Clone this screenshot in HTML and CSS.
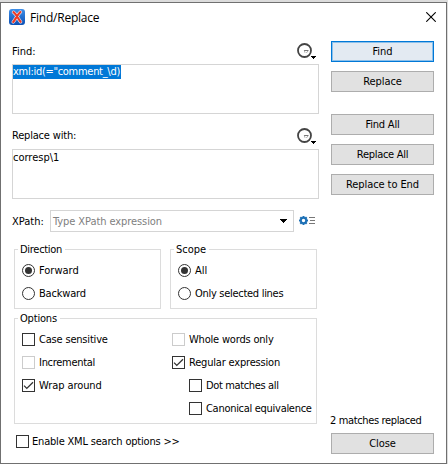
FILE: index.html
```html
<!DOCTYPE html>
<html lang="en">
<head>
<meta charset="utf-8">
<title>Find/Replace</title>
<link rel="stylesheet" href="styles.css">
</head>
<body>
<svg class="defs" width="0" height="0" aria-hidden="true">
  <symbol id="history" viewBox="0 0 19 17">
    <circle cx="7.5" cy="7.5" r="6.5" fill="#fff" stroke="#444" stroke-width="1.8"/>
    <path d="M7 7.5H11.5" fill="none" stroke="#777" stroke-width="1"/>
    <path d="M7.3 7.5L8 9.8M11 8L9.3 10" fill="none" stroke="#999" stroke-width=".8"/>
    <path d="M14 13h5v1h-1v1h-1v1h-1v-1h-1v-1h-1z" fill="#000"/>
  </symbol>
  <symbol id="tick" viewBox="0 0 11 11">
    <path d="M1 5.6L3.8 8.4L10 2.2" fill="none" stroke="#333" stroke-width="1.3"/>
  </symbol>
</svg>
<main class="dialog">
  <header class="titlebar">
    <svg class="logo" width="16" height="16" viewBox="0 0 16 16">
      <defs><linearGradient id="blue" x2="0" y2="1"><stop stop-color="#3f8fe8"/><stop offset="1" stop-color="#0a4fb4"/></linearGradient></defs>
      <rect width="16" height="16" rx="3" fill="url(#blue)"/>
      <path d="M4.5 3.2C7.5 5 9 10 11.6 12.8M11.4 3C8.5 5.5 7 9.5 4.2 13" fill="none" stroke="#d9dff0" stroke-width="3.4" stroke-linecap="round"/>
      <path d="M4.5 3.2C7.5 5 9 10 11.6 12.8M11.4 3C8.5 5.5 7 9.5 4.2 13" fill="none" stroke="#ee3a24" stroke-width="2.1" stroke-linecap="round"/>
    </svg>
    <h1 class="title">Find/Replace</h1>
    <svg class="close" width="10" height="10" viewBox="0 0 10 10"><path d="M.3 .3L9.7 9.7M9.7 .3L.3 9.7" stroke="#000" stroke-width="1.1"/></svg>
  </header>
  <div class="content">
    <section class="form">
      <div class="label-row"><span>Find:</span><svg width="19" height="17"><use href="#history"/></svg></div>
      <div class="textarea"><span class="selected tight">xml:id(="comment_\d)</span></div>
      <div class="label-row second"><span class="snug">Replace with:</span><svg width="19" height="17"><use href="#history"/></svg></div>
      <div class="textarea"><span>corresp\1</span></div>
      <div class="xpath-row">
        <span class="xpath-label">XPath:</span>
        <div class="combo"><span class="slight">Type XPath expression</span><svg width="7" height="4" viewBox="0 0 7 4"><path d="M0 0h7v1H6v1H5v1H4v1H3V3H2V2H1V1H0z"/></svg></div>
        <svg class="gear" width="17" height="10" viewBox="0 0 17 10">
          <path d="M4.5 0V9M0 4.5H9M1.3 1.3L7.7 7.7M7.7 1.3L1.3 7.7" stroke="#1b6fb5" stroke-width="2"/>
          <circle cx="4.5" cy="4.5" r="2.6" fill="#fff" stroke="#1b6fb5" stroke-width="1.8"/>
          <path d="M10 1.5h6M11 4.5h5M10 7.5h6" stroke="#777"/>
        </svg>
      </div>
      <div class="groups">
        <fieldset class="group">
          <legend class="tight">Direction</legend>
          <label class="opt"><i class="radio on"></i><span>Forward</span></label>
          <label class="opt"><i class="radio"></i><span class="snug">Backward</span></label>
        </fieldset>
        <fieldset class="group">
          <legend>Scope</legend>
          <label class="opt"><i class="radio on"></i><span>All</span></label>
          <label class="opt"><i class="radio"></i><span class="tight">Only selected lines</span></label>
        </fieldset>
      </div>
      <fieldset class="group options">
        <legend class="snug">Options</legend>
        <div class="columns">
          <div class="column">
            <label class="opt"><i class="check"></i><span class="snug">Case sensitive</span></label>
            <label class="opt"><i class="check off"></i><span class="tight">Incremental</span></label>
            <label class="opt"><i class="check"><svg width="11" height="11"><use href="#tick"/></svg></i><span class="slight">Wrap around</span></label>
          </div>
          <div class="column">
            <label class="opt"><i class="check off"></i><span class="snug">Whole words only</span></label>
            <label class="opt"><i class="check"><svg width="11" height="11"><use href="#tick"/></svg></i><span class="snug">Regular expression</span></label>
            <label class="opt sub"><i class="check"></i><span class="tighter">Dot matches all</span></label>
            <label class="opt sub"><i class="check"></i><span class="tight">Canonical equivalence</span></label>
          </div>
        </div>
      </fieldset>
      <label class="opt enable"><i class="check"></i><span class="snug">Enable XML search options &gt;&gt;</span></label>
    </section>
    <aside class="actions">
      <button class="btn primary"><span>Find</span></button>
      <button class="btn"><span class="slight">Replace</span></button>
      <button class="btn gap"><span class="snug">Find All</span></button>
      <button class="btn"><span class="tight">Replace All</span></button>
      <button class="btn"><span class="slight">Replace to End</span></button>
      <div class="status"><span class="tighter">2 matches replaced</span></div>
      <button class="btn"><span class="slight">Close</span></button>
    </aside>
  </div>
</main>
</body>
</html>
```
FILE: styles.css
```css
* { box-sizing: border-box; }
html, body { margin: 0; }
body {
  width: 448px; height: 464px; padding: 2px 1px 0 0; overflow: hidden;
  background: #dcdcdc; color: #000;
  font: 11px/15px "DejaVu Sans Condensed", "DejaVu Sans", sans-serif;
  font-stretch: condensed;
}
.defs { position: absolute; }
svg { display: block; flex: none; }
span, legend { white-space: nowrap; }
.slight { letter-spacing: -0.08px; }
.snug { letter-spacing: -0.19px; }
.tight { letter-spacing: -0.29px; }
.tighter { letter-spacing: -0.36px; }
.dialog { width: 447px; height: 462px; border: 1px solid #707070; background: #fff; display: flex; flex-direction: column; }
.titlebar { height: 38px; flex: none; display: flex; align-items: flex-start; padding: 6px 10px 0 8px; }
.title { margin: 0 auto 0 5px; font: 12px/18px "Open Sans", sans-serif; letter-spacing: -0.22px; }
.close { margin-top: 3px; }
.content { display: flex; height: 422px; }
.form { width: 307px; margin-left: 11px; }
.label-row { height: 23px; display: flex; justify-content: space-between; padding: 2px 3px 0 0; }
.label-row > span { margin-top: 1px; }
.label-row.second { height: 35px; padding-top: 14px; }
.label-row.second > span { margin-top: 0; }
.textarea { height: 50px; border: 1px solid #d5d5d5; line-height: 15px; display: flex; align-items: flex-start; }
.selected { background: #0078d7; color: #fff; height: 14px; line-height: 14px; padding-right: 1px; }
.xpath-row { display: flex; align-items: center; height: 22px; margin-top: 11px; }
.xpath-label { width: 38px; flex: none; }
.combo { width: 244px; height: 22px; border: 1px solid #d5d5d5; display: flex; align-items: center; justify-content: space-between; padding: 0 6px 0 2px; color: #808080; }
.combo svg { fill: #000; }
.gear { margin-left: 5px; }
.groups { display: flex; gap: 9px; margin: 11px 0 0 2px; }
.group { margin: 0; padding: 3px 0 0 7px; min-width: 0; width: 147px; height: 66px; border: 1px solid #dcdcdc; }
.group legend { padding: 0 3px 0 2px; margin-left: -4px; height: 13px; line-height: 14px; }
.opt { display: flex; align-items: center; height: 23px; gap: 4px; }
.options { width: 303px; height: 112px; margin: 3px 0 0 2px; }
.columns { display: flex; }
.column { width: 150px; flex: none; }
.sub { padding-left: 17px; }
.radio, .check { flex: none; width: 13px; height: 13px; border: 1px solid #333; background: #fff; }
.radio { border-radius: 50%; padding: 2px; }
.radio.on::after { content: ""; display: block; width: 7px; height: 7px; border-radius: 50%; background: #333; }
.check.off { border-color: #ccc; }
.enable { margin: 6px 0 0 4px; gap: 3px; }
.actions { width: 103px; margin-left: 12px; display: flex; flex-direction: column; }
.btn { width: 103px; height: 21px; flex: none; margin: 0 0 9px; padding: 0; border: 1px solid #adadad; background: #e1e1e1; color: #000; font: inherit; line-height: 15px; }
.btn.gap { margin-top: 13px; }
.btn.primary { border-color: #0078d7; background: #e3eaf2; box-shadow: inset 0 0 0 1px #8cc0ea; }
.status { margin: auto 0 5px -1px; }
```
